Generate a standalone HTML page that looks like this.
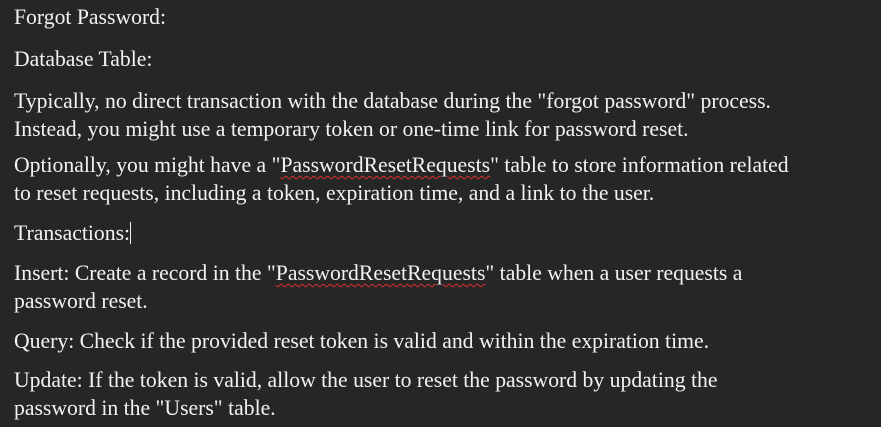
<!DOCTYPE html>
<html><head><style>
html,body{margin:0;padding:0;background:#262626;width:881px;height:427px;overflow:hidden}
div{position:absolute;left:14px;font-family:"Liberation Serif",serif;font-size:21.7px;line-height:28px;color:#f2f2f2;white-space:nowrap}
.s{text-decoration:underline wavy #e03030;text-decoration-thickness:1px;text-underline-offset:3px}
.c{display:inline-block;width:1px;height:22px;background:#f2f2f2;vertical-align:-4px}
</style></head><body>
<div style="top:3px">Forgot Password:</div>
<div style="top:45px">Database Table:</div>
<div style="top:87px">Typically, no direct transaction with the database during the "forgot password" process.</div>
<div style="top:115px">Instead, you might use a temporary token or one-time link for password reset.</div>
<div style="top:151px">Optionally, you might have a "<span class="s">PasswordResetRequests</span>" table to store information related</div>
<div style="top:179px">to reset requests, including a token, expiration time, and a link to the user.</div>
<div style="top:219px">Transactions:<span class="c"></span></div>
<div style="top:259px">Insert: Create a record in the "<span class="s">PasswordResetRequests</span>" table when a user requests a</div>
<div style="top:287px">password reset.</div>
<div style="top:327px">Query: Check if the provided reset token is valid and within the expiration time.</div>
<div style="top:366px">Update: If the token is valid, allow the user to reset the password by updating the</div>
<div style="top:394px">password in the "Users" table.</div>
</body></html>
